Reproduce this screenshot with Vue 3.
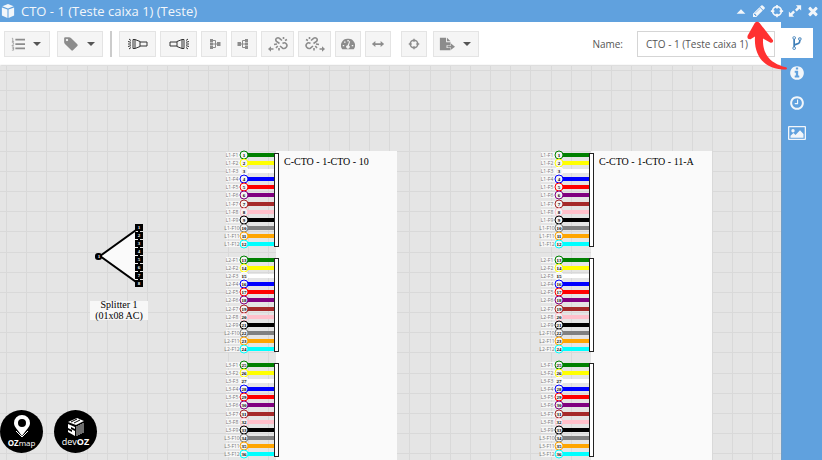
<template>
  <div class="window">
    <header class="titlebar">
      <Icon name="cube" :size="14" />
      <h1 class="title">CTO - 1 (Teste caixa 1) (Teste)</h1>
      <div class="window-actions">
        <button
          v-for="action in windowActions"
          :key="action.icon"
          type="button"
          :aria-label="action.label"
        >
          <Icon :name="action.icon" :size="14" />
        </button>
      </div>
    </header>

    <div class="body">
      <main class="main">
        <div class="toolbar">
          <div v-for="(group, g) in toolGroups" :key="g" :class="['tools', `tools--${g}`]">
            <button
              v-for="tool in group"
              :key="tool.icon"
              type="button"
              :class="['tool', `tool--${tool.kind}`]"
              :aria-label="tool.label"
            >
              <Icon :name="tool.icon" :size="tool.size || 14" />
              <span v-if="tool.kind === 'menu'" class="caret"></span>
            </button>
          </div>
          <label class="name-label" for="box-name">Name:</label>
          <input id="box-name" v-model="boxName" class="name-input" type="text" />
        </div>

        <div class="canvas">
          <svg class="diagram" width="100%" height="100%">
            <defs>
              <pattern id="grid" x="6" y="4" width="121" height="121" patternUnits="userSpaceOnUse">
                <template v-for="n in gridLines" :key="n">
                  <rect :x="n" y="0" width="1" height="121" fill="#d9d9d9" />
                  <rect x="0" :y="n" width="121" height="1" fill="#d9d9d9" />
                </template>
              </pattern>
            </defs>
            <rect width="100%" height="100%" fill="url(#grid)" />

            <!-- Splitter -->
            <g class="splitter">
              <path d="M100 190L139 162V218Z" fill="#fafafa" stroke="#000" stroke-width="2" />
              <rect x="95" y="187" width="7" height="7" rx="3" />
              <text class="port" x="99" y="192">1</text>
              <template v-for="n in 8" :key="n">
                <rect x="135" :y="150 + n * 8" width="8" height="7" />
                <text class="port" x="139" :y="155 + n * 8">{{ n }}</text>
              </template>
              <rect x="90" y="235" width="58" height="19" fill="#f7f7f7" />
              <text class="caption" x="119" y="242">Splitter 1</text>
              <text class="caption" x="119" y="253">(01x08 AC)</text>
            </g>

            <!-- Cables -->
            <g v-for="cable in cables" :key="cable.name" :transform="`translate(${cable.x} 85)`">
              <rect x="51" y="0" width="121" height="100%" fill="#fafafa" />
              <text class="cable-name" x="59" y="14">{{ cable.name }}</text>
              <g v-for="tube in 3" :key="tube" :transform="`translate(0 ${(tube - 1) * 105})`">
                <g v-for="(color, i) in fiberColors" :key="color" :transform="`translate(0 ${fiberY(i)})`">
                  <rect x="1" y="-3" width="14" height="6" fill="#f6f6f6" />
                  <text class="fiber-name" x="7" y="2">L{{ tube }}-F{{ i + 1 }}</text>
                  <rect x="22" y="-2" width="27" height="4" :fill="color" />
                  <circle cx="19" cy="0" r="4" fill="#f4f4f4" :stroke="color" />
                  <text class="fiber-number" x="19" y="2">{{ (tube - 1) * 12 + i + 1 }}</text>
                </g>
                <rect x="49.5" y="2.5" width="4" height="93" fill="#fff" stroke="#222" />
              </g>
            </g>
          </svg>

          <div class="brands">
            <a href="#ozmap" class="brand">
              <svg width="18" height="23" viewBox="0 0 18 23" aria-hidden="true">
                <path
                  fill="#fff"
                  fill-rule="evenodd"
                  d="M9 0a8 8 0 0 1 8 8c0 4-4 7-8 13C5 15 1 12 1 8a8 8 0 0 1 8-8zm0 4a4 4 0 1 0 0 8 4 4 0 0 0 0-8z"
                />
                <path d="M3 16l6 6 6-6" fill="none" stroke="#fff" />
              </svg>
              <span><b>OZ</b>map</span>
            </a>
            <a href="#devoz" class="brand brand--dev">
              <svg width="18" height="20" viewBox="0 0 18 20" aria-hidden="true">
                <path d="M1 5l9-4 7 3-8 4z" fill="#fff" />
                <path d="M4 5l6-3M7 6l6-3" stroke="#000" />
                <path d="M1 7l7 3v2l-4-2v2l4 2v5l-7-4v-2l4 2v-2l-4-2z" fill="#fff" />
                <path d="M10 9v10M12 8v10M14 7v10M16 6v10" stroke="#ddd" />
              </svg>
              <span>dev<b>OZ</b></span>
            </a>
          </div>
        </div>
      </main>

      <nav class="sidebar">
        <button
          v-for="tab in tabs"
          :key="tab.icon"
          type="button"
          :class="['tab', { 'tab--active': tab.icon === activeTab }]"
          :aria-label="tab.label"
          @click="activeTab = tab.icon"
        >
          <Icon :name="tab.icon" :size="tab.size" />
        </button>
      </nav>
    </div>

    <!-- Points at the edit button -->
    <svg class="pointer" width="45" height="50" viewBox="745 21 45 50" aria-hidden="true">
      <path
        fill="#ff3131"
        d="M754.6 23.2Q757 20.5 759.6 23L773 40.2Q773.6 43.2 770.5 42.7L763 38.4C762.5 51 767 62.5 786 67.3Q788 68.6 786 69.4C766 70.5 753.500 57 755 36.500L750.500 39.300Q746.500 39.500 747.700 35.500Z"
      />
    </svg>
  </div>
</template>

<script setup>
import { ref, h } from "vue";

// fill: solid shapes, line: stroked shapes
const icons = {
  cube: {
    box: "0 0 16 16",
    fill: "M8 0l6.500 2.500L8 5 1.500 2.500zM1 4l6.400 2.400V16L1 13zM15 4L8.600 6.400V16L15 13z",
  },
  up: { box: "0 0 16 16", fill: "M3 11l5-5 5 5z" },
  pencil: {
    box: "0 0 1792 1792",
    fill: "M491 1536l91-91-235-235-91 91v107h128v128h107zm523-928q0-22-22-22-10 0-17 7l-542 542q-7 7-7 17 0 22 22 22 10 0 17-7l542-542q7-7 7-17zm-54-192l416 416-832 832h-416v-416zm683 96q0 53-37 90l-166 166-416-416 166-165q36-38 90-38 53 0 91 38l235 234q37 39 37 91z",
  },
  target: {
    box: "0 0 16 16",
    line: "M8 3a5 5 0 1 0 0 10A5 5 0 0 0 8 3zM8 1v4M8 11v4M1 8h4M11 8h4",
    width: 2,
  },
  expand: {
    box: "0 0 16 16",
    fill: "M9 1.500h6v6l-2-2-3 3L8 6.500l3-3zM7 14.500H1v-6l2 2 3-3L8 9.500l-3 3z",
  },
  close: {
    box: "0 0 1792 1792",
    fill: "M1490 1322q0 40-28 68l-136 136q-28 28-68 28t-68-28l-294-294-294 294q-28 28-68 28t-68-28l-136-136q-28-28-28-68t28-68l294-294-294-294q-28-28-28-68t28-68l136-136q28-28 68-28t68 28l294 294 294-294q28-28 68-28t68 28l136 136q28 28 28 68t-28 68l-294 294 294 294q28 28 28 68z",
  },
  list: {
    box: "0 0 16 16",
    fill: "M5 2h11v2H5zM5 7h11v2H5zM5 12h11v2H5z",
    line: "M1 1.500h1V5M1 5h2.500M1 6.500h2v1.500l-2 2h2.500M1 11.500h2v3.500H1M1.500 13H3",
    width: 0.8,
  },
  tag: {
    box: "0 0 1792 1792",
    fill: "M576 448q0-53-37.500-90.500t-90.500-37.500-90.500 37.500-37.500 90.500 37.500 90.500 90.500 37.500 90.500-37.500 37.500-90.500zm1067 576q0 53-37 90l-491 492q-39 37-91 37-53 0-90-37l-715-716q-38-37-64.500-101t-26.500-117v-416q0-52 38-90t90-38h416q53 0 117 26.500t102 64.500l715 714q37 39 37 91z",
  },
  torchLeft: {
    box: "0 0 20 12",
    line: "M12 4h7v4h-7M12 3.500L7 1.500H5v9h2l5-2zM7 2v8M0 6h3M1 1l2 1.500M0 3.500l3 .8M0 8.500l3-.8M1 11l2-1.500",
    color: "#333",
  },
  torchRight: {
    box: "0 0 20 12",
    line: "M8 4H1v4h7M8 3.500l5-2h2v9h-2l-5-2zM13 2v8M20 6h-3M19 1l-2 1.500M20 3.500l-3 .8M20 8.500l-3-.8M19 11l-2-1.500",
    color: "#333",
  },
  splitRight: {
    box: "0 0 14 14",
    fill: "M3 2h3v3H3zM3 5.500h3v3H3zM3 9h3v3H3zM10 5h3.500v4H10z",
    line: "M6 3.500h2.500v7H6M6 7h5",
  },
  splitLeft: {
    box: "0 0 14 14",
    fill: "M8 2h3v3H8zM8 5.500h3v3H8zM8 9h3v3H8zM.5 5H4v4H.5z",
    line: "M8 3.500H5.500v7H8M8 7H3",
  },
  unlinkLeft: {
    box: "0 0 20 14",
    fill: "M0 12l3-2.800v2h2.500v1.600H3v2z",
    line: "M11.500 6.500L8.500 4.500Q7 2.500 8.500 1.300q1.500-1.100 3 0l2.500 2.200M14.500 6.500q2-1.500 3.500 0 1.800 2 .3 3.700-1.800 2-3.800 1L12 9M15.500 0v2M19 2.500l-2 1M6 7.500l3-.5M8 11l1.700-2M11 13.500V11",
    width: 1.6,
  },
  unlinkRight: {
    box: "0 0 20 14",
    fill: "M20 12l-3-2.800v2h-2.500v1.600H17v2z",
    line: "M8.500 6.500l3-2q1.500-2 0-3.200-1.500-1.100-3 0L6 3.500M5.500 6.500Q3.500 5 2 6.500q-1.800 2-.3 3.700 1.800 2 3.800 1L8 9M4.500 0v2M1 2.500l2 1M14 7.500l-3-.5M12 11l-1.700-2M9 13.500V11",
    width: 1.6,
  },
  gauge: {
    box: "0 0 16 16",
    fill: "M8 2a7.500 7.500 0 0 0-6.500 12h13A7.500 7.500 0 0 0 8 2zM7.300 3.500h1.600v1.600H7.300zM3.500 5h1.700v1.700H3.500zM2 9h1.700v1.700H2zM12.300 9H14v1.700h-1.700zM10.500 4.800L9 9.600a2 2 0 1 1-1.400-.3L9.600 4.500z",
  },
  width: {
    box: "0 0 16 16",
    fill: "M1 8l4-3.500V7h6V4.500L15 8l-4 3.500V9H5v2.500z",
  },
  export: {
    box: "0 0 18 16",
    fill: "M1 1h7v5h5v3.500H8.500v3H13V15H1zM9 1l4 4H9zM13.500 7.500L18 11l-4.500 3.500V12H9.500v-2h4z",
  },
  fork: {
    box: "0 0 1792 1792",
    fill: "M672 1472q0-40-28-68t-68-28-68 28-28 68 28 68 68 28 68-28 28-68zm0-1152q0-40-28-68t-68-28-68 28-28 68 28 68 68 28 68-28 28-68zm640 128q0-40-28-68t-68-28-68 28-28 68 28 68 68 28 68-28 28-68zm96 0q0 52-26 96.500t-70 69.500q-2 287-226 414-67 38-203 81-128 40-169.500 71t-41.500 100v26q44 25 70 69.500t26 96.500q0 80-56 136t-136 56-136-56-56-136q0-52 26-96.500t70-69.500v-820q-44-25-70-69.500t-26-96.500q0-80 56-136t136-56 136 56 56 136q0 52-26 96.500t-70 69.500v497q54-26 154-57 55-17 87.500-29.500t70.500-31 59-39.500 40.500-51 28-69.500 8.500-91.500q-44-25-70-69.500t-26-96.500q0-80 56-136t136-56 136 56 56 136z",
  },
  info: {
    box: "0 0 1792 1792",
    fill: "M1152 1376v-160q0-14-9-23t-23-9h-96v-512q0-14-9-23t-23-9h-320q-14 0-23 9t-9 23v160q0 14 9 23t23 9h96v320h-96q-14 0-23 9t-9 23v160q0 14 9 23t23 9h448q14 0 23-9t9-23zm-128-896v-160q0-14-9-23t-23-9h-192q-14 0-23 9t-9 23v160q0 14 9 23t23 9h192q14 0 23-9t9-23zm640 416q0 209-103 385.500t-279.500 279.500-385.500 103-385.500-103-279.500-279.500-103-385.500 103-385.500 279.500-279.500 385.500-103 385.500 103 279.500 279.500 103 385.500z",
  },
  clock: {
    box: "0 0 1792 1792",
    fill: "M1024 544v448q0 14-9 23t-23 9h-320q-14 0-23-9t-9-23v-64q0-14 9-23t23-9h224v-352q0-14 9-23t23-9h64q14 0 23 9t9 23zm416 352q0-148-73-273t-198-198-273-73-273 73-198 198-73 273 73 273 198 198 273 73 273-73 198-198 73-273zm224 0q0 209-103 385.500t-279.500 279.500-385.500 103-385.500-103-279.500-279.500-103-385.500 103-385.500 279.500-279.500 385.500-103 385.500 103 279.500 279.500 103 385.500z",
  },
  image: {
    box: "0 0 18 16",
    fill: "M1 1h16a1 1 0 0 1 1 1v12a1 1 0 0 1-1 1H1a1 1 0 0 1-1-1V2a1 1 0 0 1 1-1zM1.300 2.300v11.400h15.400V2.300zM5 4a1.700 1.700 0 1 1 0 3.400A1.700 1.700 0 0 1 5 4zM2.500 12.700v-2l3-2.700 2 2 4.500-4.700 3.500 3.700v3.700z",
  },
};

const Icon = ({ name, size }) => {
  const { box, fill, line, width = 1, color = "currentColor" } = icons[name];
  return h("svg", { width: size, height: size, viewBox: box, "aria-hidden": "true" }, [
    fill && h("path", { d: fill, fill: color, "fill-rule": "evenodd" }),
    line && h("path", { d: line, fill: "none", stroke: color, "stroke-width": width }),
  ]);
};
Icon.props = ["name", "size"];

const windowActions = [
  { icon: "up", label: "Collapse" },
  { icon: "pencil", label: "Edit" },
  { icon: "target", label: "Locate" },
  { icon: "expand", label: "Maximize" },
  { icon: "close", label: "Close" },
];

const toolGroups = [
  [
    { icon: "list", label: "Order", kind: "menu" },
    { icon: "tag", label: "Labels", kind: "menu", size: 16 },
  ],
  [
    { icon: "torchLeft", label: "Light left", kind: "wide", size: 20 },
    { icon: "torchRight", label: "Light right", kind: "wide", size: 20 },
    { icon: "splitRight", label: "Split right", kind: "small" },
    { icon: "splitLeft", label: "Split left", kind: "small" },
    { icon: "unlinkLeft", label: "Unlink left", kind: "medium", size: 20 },
    { icon: "unlinkRight", label: "Unlink right", kind: "medium", size: 20 },
    { icon: "gauge", label: "Power", kind: "small" },
    { icon: "width", label: "Fit width", kind: "small" },
  ],
  [
    { icon: "target", label: "Center", kind: "small", size: 12 },
    { icon: "export", label: "Export", kind: "menu", size: 16 },
  ],
];

const tabs = [
  { icon: "fork", label: "Connections", size: 16 },
  { icon: "info", label: "Information", size: 16 },
  { icon: "clock", label: "History", size: 16 },
  { icon: "image", label: "Pictures", size: 18 },
];

const activeTab = ref("fork");
const boxName = ref("CTO - 1 (Teste caixa 1)");

const gridLines = [0, 20, 40, 61, 81, 101];

const cables = [
  { name: "C-CTO - 1-CTO - 10", x: 225 },
  { name: "C-CTO - 1-CTO - 11-A", x: 540 },
];

const fiberColors = [
  "green",
  "yellow",
  "white",
  "blue",
  "red",
  "purple",
  "brown",
  "pink",
  "black",
  "gray",
  "orange",
  "cyan",
];

function fiberY(index) {
  return 4 + Math.round((index * 97) / 12);
}
</script>

<style>
body {
  margin: 0;
}
</style>

<style scoped>
.window {
  position: relative;
  display: flex;
  flex-direction: column;
  height: 100vh;
  overflow: hidden;
  font-family: "Open Sans", sans-serif;
  color: #555;
}
button {
  display: flex;
  align-items: center;
  justify-content: center;
  padding: 0;
  border: 0;
  background: none;
  color: inherit;
  cursor: pointer;
}
.titlebar {
  display: flex;
  align-items: center;
  height: 22px;
  padding: 0 2px 0 1px;
  background: #60a1de;
  color: #f2f6fa;
}
.title {
  flex: 1;
  margin: 0 0 0 6px;
  font-size: 13px;
  font-weight: 400;
  line-height: 22px;
}
.window-actions {
  display: flex;
  gap: 4px;
}
.body {
  display: flex;
  flex: 1;
  min-height: 0;
}
.main {
  display: flex;
  flex: 1;
  flex-direction: column;
  min-width: 0;
}
.toolbar {
  display: flex;
  align-items: center;
  height: 44px;
  padding: 0 6px 0 4px;
  background: #fff;
}
.tools {
  display: flex;
  gap: 4px;
}
.tools--0 {
  gap: 7px;
  padding-right: 7px;
  margin-right: 7px;
  border-right: 2px solid #ccc;
}
.tools--2 {
  gap: 6px;
  margin-left: 10px;
}
.tool {
  height: 26px;
  box-sizing: border-box;
  border: 1px solid #e4e4e4;
  background: #f5f5f5;
  color: #8c8c8c;
}
.tool--menu {
  gap: 8px;
  width: 46px;
  padding-right: 3px;
}
.tool--wide {
  width: 37px;
}
.tool--medium {
  width: 33px;
}
.tool--small {
  width: 26px;
}
.caret {
  border: 4px solid transparent;
  border-top-color: #555;
  border-bottom: 0;
}
.name-label {
  margin-left: auto;
  font-size: 10px;
}
.name-input {
  width: 138px;
  height: 26px;
  margin-left: 14px;
  padding: 0 8px;
  box-sizing: border-box;
  border: 1px solid #d5d5d5;
  background: #fff;
  color: #555;
  font: 10px "Open Sans", sans-serif;
}
.canvas {
  position: relative;
  flex: 1;
  min-height: 0;
  background: #e5e5e5;
  box-shadow: 0 0 2px #999;
}
.diagram {
  display: block;
}
.diagram text {
  font-family: "Liberation Serif", serif;
}
.diagram .cable-name {
  font-size: 10px;
}
.diagram .caption {
  font-size: 10px;
  text-anchor: middle;
}
.diagram .port,
.diagram .fiber-number {
  font-size: 5px;
  font-weight: 700;
  text-anchor: middle;
}
.diagram .port {
  fill: #fff;
}
.diagram .fiber-name {
  font-family: "Open Sans", sans-serif;
  font-size: 5px;
  fill: #777;
  text-anchor: middle;
}
.brands {
  position: absolute;
  bottom: 7px;
  left: 0;
  display: flex;
  gap: 11px;
}
.brand {
  display: flex;
  flex-direction: column;
  align-items: center;
  justify-content: center;
  width: 43px;
  height: 43px;
  border-radius: 50%;
  background: #000;
  color: #fff;
  font-size: 8px;
  line-height: 10px;
  text-decoration: none;
}
.brand--dev {
  font-size: 9px;
}
.sidebar {
  display: flex;
  flex-direction: column;
  width: 41px;
  padding-top: 6px;
  box-sizing: border-box;
  background: #60a1de;
  color: #f2f6fa;
}
.tab {
  width: 32px;
  height: 30px;
}
.tab--active {
  background: #fff;
  color: #3f7fb8;
}
.pointer {
  position: absolute;
  top: 21px;
  right: 32px;
  pointer-events: none;
}
</style>
